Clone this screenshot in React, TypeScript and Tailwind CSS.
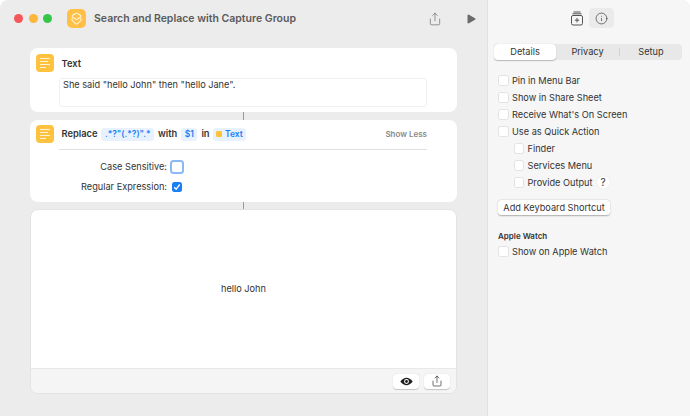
import { Info, Share, Play } from "lucide-react";

const font = { fontFamily: "Inter, 'Liberation Sans', sans-serif" };

function ActionIcon() {
  return (
    <div className="w-[18px] h-[18px] rounded-[4px] bg-[#ffc23f] flex flex-col justify-center gap-[1.5px] pl-[3.5px] shrink-0">
      <div className="w-[10px] h-[1.5px] bg-[#fff3d6]" />
      <div className="w-[8px] h-[1.5px] bg-[#fff3d6]" />
      <div className="w-[10px] h-[1.5px] bg-[#fff3d6]" />
      <div className="w-[6px] h-[1.5px] bg-[#fff3d6]" />
    </div>
  );
}

function Token({ children }: { children: React.ReactNode }) {
  return (
    <span className="h-[13px] px-[3.5px] rounded-[3px] bg-[#e8f2fe] text-[#1a7ef5] text-[8.5px] font-semibold leading-[13px] flex items-center gap-[3px]">
      {children}
    </span>
  );
}

function Check({ label, indent, help }: { label: string; indent?: boolean; help?: boolean }) {
  return (
    <div className={`h-[17px] flex items-center ${indent ? "pl-[15.5px]" : ""}`}>
      <div className="w-[10.5px] h-[10.5px] rounded-[2.5px] bg-white border border-[#e2e2e2] shrink-0" />
      <span className="ml-[3.5px] text-[9.2px] text-[#333]">{label}</span>
      {help && (
        <span className="ml-[4px] w-[13px] h-[13px] rounded-full bg-white shadow-[0_0_1px_rgba(0,0,0,0.15)] text-[10px] text-[#333] flex items-center justify-center">
          ?
        </span>
      )}
    </div>
  );
}

function Connector({ h }: { h: string }) {
  return <div className={`w-px ${h} bg-[#9a9a9a] mx-auto`} />;
}

export default function App() {
  return (
    <div className="w-[690px] h-[416px] flex overflow-hidden bg-[#ececec] rounded-t-[8px]" style={font}>
      {/* Editor side */}
      <div className="w-[487px] shrink-0 flex flex-col">
        <div className="h-[48px] shrink-0 flex items-start pt-[9px] pl-[14px]">
          <div className="flex items-center gap-[5.5px] h-[19px]">
            <div className="w-[9px] h-[9px] rounded-full bg-[#f4575a]" />
            <div className="w-[9px] h-[9px] rounded-full bg-[#fbb73c]" />
            <div className="w-[9px] h-[9px] rounded-full bg-[#35c648]" />
          </div>
          <div className="ml-[15px] w-[19px] h-[19px] rounded-[5px] bg-[#ffc045] flex items-center justify-center">
            <svg width="13" height="14" viewBox="0 0 13 14" fill="none" stroke="#fff3d6" strokeWidth="1.2">
              <path d="M5.5 1.4 Q6.5 0.8 7.5 1.4 L10.2 3.2 Q11.4 4.2 10.2 5.2 L7.5 7 Q6.5 7.6 5.5 7 L2.8 5.2 Q1.6 4.2 2.8 3.2 Z" />
              <path d="M2.4 6.2 Q1.2 7.4 2.4 8.6 L5.5 11.6 Q6.5 12.4 7.5 11.6 L10.6 8.6 Q11.8 7.4 10.6 6.2" />
            </svg>
          </div>
          <span className="ml-[8px] h-[19px] leading-[19px] text-[10.5px] font-semibold text-[#5a5a5a]">
            Search and Replace with Capture Group
          </span>
          <div className="ml-auto mr-[10px] h-[19px] flex items-center gap-[23px]">
            <Share size={14} strokeWidth={1.2} className="text-[#6b6b6b]" />
            <Play size={12} fill="#6b6b6b" strokeWidth={0} className="text-[#6b6b6b]" />
          </div>
        </div>

        <div className="pl-[30px] pr-[30px] flex flex-col">
          {/* Text action */}
          <div className="h-[64px] bg-white rounded-[8px] pl-[6px] pr-[30px] pt-[6px] flex flex-col">
            <div className="flex items-center">
              <ActionIcon />
              <span className="ml-[7.5px] pt-[1px] text-[9.3px] font-semibold text-[#333]">Text</span>
            </div>
            <div className="mt-[6px] ml-[23px] h-[29px] rounded-[3px] border border-[#f0f0f0] pl-[3px] text-[9.2px] leading-[12px] text-[#333]">
              She said "hello John" then "hello Jane".
            </div>
          </div>
          <Connector h="h-[8px]" />

          {/* Replace action */}
          <div className="h-[82px] bg-white rounded-[8px] pl-[6px] pr-[30px] pt-[5px]">
            <div className="flex items-center">
              <ActionIcon />
              <span className="ml-[7.5px] text-[9.3px] font-semibold text-[#333]">Replace</span>
              <span className="ml-[4px]"><Token>.*?"(.*?)".*</Token></span>
              <span className="ml-[4px] text-[9.3px] font-semibold text-[#333]">with</span>
              <span className="ml-[4px]"><Token>$1</Token></span>
              <span className="ml-[4px] text-[9.3px] font-semibold text-[#333]">in</span>
              <span className="ml-[3px]">
                <Token>
                  <span className="w-[6px] h-[6px] rounded-[1px] bg-[#ffc23f]" />
                  Text
                </Token>
              </span>
              <span className="ml-auto text-[8px] font-semibold text-[#8a8a8a]">Show Less</span>
            </div>
            <div className="mt-[5.5px] ml-[23px] h-px bg-[#e0e0e0]" />
            <div className="mt-[7px] flex items-center h-[20px]">
              <span className="w-[131px] text-right text-[9.2px] text-[#333]">Case Sensitive:</span>
              <div className="ml-[3px] w-[14px] h-[14px] rounded-[3.5px] border-2 border-[#8bb9f7] bg-white" />
            </div>
            <div className="flex items-center h-[20px]">
              <span className="w-[131px] text-right text-[9.2px] text-[#333]">Regular Expression:</span>
              <div className="ml-[5px] w-[10px] h-[10px] rounded-[2.5px] bg-[#1a7ef5] flex items-center justify-center">
                <svg width="8" height="8" viewBox="0 0 8 8" fill="none" stroke="#fff" strokeWidth="1.4">
                  <path d="M1.2 4.2 L3.2 6.2 L6.8 1.4" />
                </svg>
              </div>
            </div>
          </div>
          <Connector h="h-[7px]" />

          {/* Quick look result */}
          <div className="h-[185px] bg-white rounded-[8px] border border-[#e3e3e3] overflow-hidden flex flex-col">
            <div className="flex-1 flex items-center justify-center text-[9.2px] text-[#333]">hello John</div>
            <div className="h-[25px] shrink-0 bg-[#f5f5f5] border-t border-[#e8e8e8] flex items-center justify-end gap-[5px] pr-[6px]">
              <div className="w-[26px] h-[15px] rounded-[4px] bg-white shadow-[0_0.5px_1px_rgba(0,0,0,0.2)] flex items-center justify-center">
                <svg width="13" height="9" viewBox="0 0 13 9">
                  <path d="M0.3 4.5 Q6.5 -3 12.7 4.5 Q6.5 12 0.3 4.5 Z" fill="#1f1f1f" />
                  <circle cx="6.5" cy="4.5" r="2.4" fill="#fff" />
                  <circle cx="6.5" cy="4.5" r="1.4" fill="#1f1f1f" />
                </svg>
              </div>
              <div className="w-[26px] h-[15px] rounded-[4px] bg-white shadow-[0_0.5px_1px_rgba(0,0,0,0.2)] flex items-center justify-center">
                <Share size={12} strokeWidth={1.4} className="text-[#333]" />
              </div>
            </div>
          </div>
        </div>
      </div>

      {/* Settings side */}
      <div className="flex-1 bg-[#f6f6f6] border-l border-[#e0e0e0] flex flex-col pl-[6px] pr-[8px]">
        <div className="h-[37px] shrink-0 flex items-start justify-center pt-[8px] gap-[2px] pl-[4px]">
          <div className="w-[20px] h-[20px] flex items-center justify-center">
            <svg width="14" height="15" viewBox="0 0 14 15" fill="none" stroke="#555" strokeWidth="1">
              <path d="M3.5 1 H10.5 M2.5 2.8 H11.5" />
              <rect x="1.5" y="4.5" width="11" height="9.5" rx="1.5" />
              <path d="M7 7 V11.4 M4.8 9.2 H9.2" />
            </svg>
          </div>
          <div className="w-[25px] h-[20px] rounded-[4px] bg-[#ebebeb] flex items-center justify-center">
            <Info size={13} strokeWidth={1.2} className="text-[#333]" />
          </div>
        </div>
        <div className="mt-[7px] h-[16px] rounded-[4px] bg-[#e8e8e8] flex items-center text-[9.2px] text-[#333]">
          <div className="w-[62px] h-[16px] rounded-[4px] bg-white shadow-[0_0.5px_1px_rgba(0,0,0,0.25)] flex items-center justify-center">Details</div>
          <div className="w-[63px] text-center">Privacy</div>
          <div className="w-px h-[8px] bg-[#d2d2d2]" />
          <div className="flex-1 text-center">Setup</div>
        </div>
        <div className="mt-[12px] pl-[4px] flex flex-col">
          <Check label="Pin in Menu Bar" />
          <Check label="Show in Share Sheet" />
          <Check label="Receive What's On Screen" />
          <Check label="Use as Quick Action" />
          <Check label="Finder" indent />
          <Check label="Services Menu" indent />
          <Check label="Provide Output" indent help />
        </div>
        <div className="mt-[9px] ml-[4px] w-[112px] h-[15px] rounded-[3.5px] bg-white shadow-[0_0.5px_1.5px_rgba(0,0,0,0.3)] flex items-center justify-center text-[9.2px] text-[#333]">
          Add Keyboard Shortcut
        </div>
        <div className="mt-[15px] ml-[4px] text-[8px] font-semibold text-[#333]">Apple Watch</div>
        <div className="mt-[1px] pl-[4px]">
          <Check label="Show on Apple Watch" />
        </div>
      </div>
    </div>
  );
}
